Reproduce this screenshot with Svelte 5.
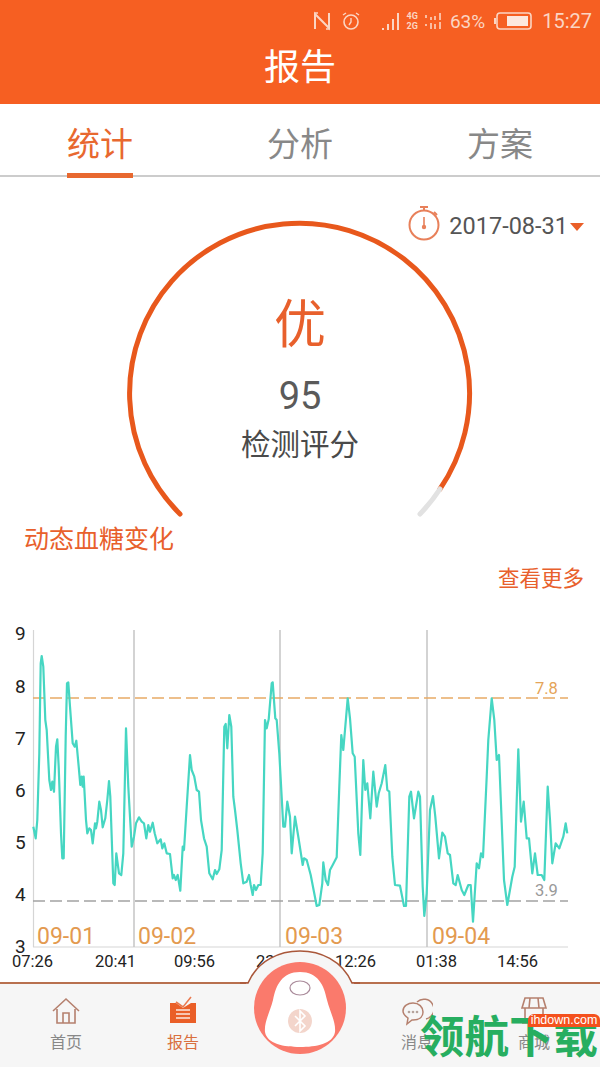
<script>
	// traced from the reference, in 3x crop coordinates: left crop starts at x=0, right crop at x=280
	const leftTrace = [
		[100,620],[107,655],[112,600],[118,400],[122,130],[125,108],[130,140],[136,300],[140,330],[148,480],[153,510],[157,485],[162,515],[168,380],[172,358],[176,440],[183,640],[187,715],[191,715],[197,350],[201,190],[205,187],[210,260],[218,370],[224,380],[229,362],[236,440],[241,495],[245,470],[248,500],[251,470],[258,600],[262,640],[268,625],[273,630],[278,670],[285,610],[288,625],[292,605],[298,545],[303,570],[308,622],[316,595],[322,540],[327,483],[331,530],[340,790],[344,795],[349,700],[357,760],[364,765],[370,700],[378,325],[385,500],[395,680],[402,650],[408,610],[417,592],[425,605],[432,610],[439,655],[445,615],[450,635],[458,608],[464,640],[472,670],[482,658],[487,685],[493,670],[500,700],[510,702],[518,775],[522,765],[527,780],[533,765],[541,812],[548,680],[552,690],[560,560],[570,405],[575,450],[583,470],[590,510],[597,515],[603,600],[612,655],[620,680],[628,760],[638,778],[645,750],[650,762],[658,748],[665,690],[673,320],[677,312],[682,385],[688,285],[694,320],[700,530],[705,570],[712,630],[722,730],[730,790],[740,785],[747,765],[752,795],[758,825],[762,795],[768,810],[775,795],[782,795],[788,700],[795,300],[800,325],[806,298],[815,190],[818,187],[826,295],[830,300],[838,400],[850,620],[855,620]
	];
	const rightTrace = [
		[22,545],[30,590],[35,700],[45,590],[55,650],[68,735],[72,715],[80,720],[92,765],[110,858],[118,855],[127,790],[130,727],[137,780],[144,795],[150,750],[158,735],[170,712],[178,500],[184,345],[190,390],[203,235],[210,295],[218,400],[224,410],[235,640],[241,705],[250,420],[256,510],[262,490],[271,595],[280,455],[290,560],[296,520],[305,490],[316,435],[322,510],[328,515],[337,710],[345,795],[360,797],[372,858],[378,858],[388,530],[393,515],[402,595],[415,515],[420,530],[428,800],[433,888],[440,820],[450,570],[459,528],[466,590],[477,715],[487,638],[495,650],[503,700],[510,705],[520,790],[527,795],[533,765],[545,810],[553,825],[565,795],[572,795],[579,905],[590,730],[597,745],[603,700],[609,712],[620,470],[625,360],[635,235],[643,300],[650,420],[657,405],[672,780],[682,855],[697,770],[704,740],[715,388],[723,605],[731,545],[740,655],[747,655],[757,760],[765,700],[773,765],[785,765],[793,780],[803,500],[810,600],[817,730],[827,670],[838,685],[850,650],[857,610],[862,640]
	];

	const glucose = [
		...leftTrace.map(([x, y]) => `${(x / 3).toFixed(1)},${(620 + y / 3).toFixed(1)}`),
		...rightTrace.map(([x, y]) => `${(280 + x / 3).toFixed(1)},${(620 + y / 3).toFixed(1)}`)
	].join(' ');

	const yLabels = [
		{ v: 9, y: 633 },
		{ v: 8, y: 686 },
		{ v: 7, y: 738 },
		{ v: 6, y: 790 },
		{ v: 5, y: 842 },
		{ v: 4, y: 894 },
		{ v: 3, y: 946 }
	];
	const days = [
		{ x: 134, labelX: 138, label: '09-02' },
		{ x: 280, labelX: 285, label: '09-03' },
		{ x: 427, labelX: 432, label: '09-04' }
	];
	const times = [
		{ x: 12, t: '07:26' },
		{ x: 95, t: '20:41' },
		{ x: 174, t: '09:56' },
		{ x: 256, t: '23:11' },
		{ x: 335, t: '12:26' },
		{ x: 416, t: '01:38' },
		{ x: 497, t: '14:56' }
	];
	const tabs = ['统计', '分析', '方案'];
</script>

<main class="page">
	<header class="top">
		<div class="status">
			<svg class="st-icon" width="18" height="20" viewBox="0 0 18 20">
				<path d="M2 18V3l14 14V2" fill="none" stroke="currentColor" stroke-width="2" />
				<path d="M5 2h-3M13 18h3" fill="none" stroke="currentColor" stroke-width="1.6" />
			</svg>
			<svg class="st-icon alarm" width="20" height="20" viewBox="0 0 20 20">
				<circle cx="10" cy="11" r="7" fill="none" stroke="currentColor" stroke-width="1.6" />
				<path d="M10 7v4l-2 3M2 4l3-2M18 4l-3-2" fill="none" stroke="currentColor" stroke-width="1.4" />
			</svg>
			<svg class="st-icon signal" width="18" height="20" viewBox="0 0 18 20">
				<path d="M2 17v2M7 13v6M12 8v11M17 2v17" stroke="currentColor" stroke-width="2" />
			</svg>
			<div class="net"><span>4G</span><span>2G</span></div>
			<svg class="st-icon" width="20" height="20" viewBox="0 0 20 20" opacity="0.8">
				<path d="M4 4v3M9 6v3M13 5v4M18 2v7M4 13v2M9 12v6M13 13v5M18 11v7" stroke="currentColor" stroke-width="2" />
			</svg>
			<span class="pct">63%</span>
			<svg class="battery" width="38" height="18" viewBox="0 0 38 18">
				<path d="M0 6h2v6H0z" fill="currentColor" />
				<rect x="3" y="1" width="34" height="16" rx="3" fill="none" stroke="currentColor" stroke-width="1.6" />
				<rect x="13" y="4" width="21" height="10" fill="#fde8de" />
			</svg>
			<span class="clock">15:27</span>
		</div>
		<h1>报告</h1>
	</header>

	<nav class="tabs">
		{#each tabs as tab, i}
			<div class="tab" class:active={i === 0}><span>{tab}</span></div>
		{/each}
	</nav>

	<section class="summary">
		<div class="score-stack">
			<svg class="gauge" width="354" height="310" viewBox="123 217 354 310">
				<path d="M180 514A170 170 0 1 1 440 489" fill="none" stroke="#e8581c" stroke-width="5" stroke-linecap="round" />
				<path d="M440 489A170 170 0 0 1 420 514" fill="none" stroke="#e2e2e2" stroke-width="5" stroke-linecap="round" />
			</svg>
			<div class="score">
				<div class="grade">优</div>
				<div class="num">95</div>
				<div class="caption">检测评分</div>
			</div>
			<div class="date">
				<svg width="34" height="36" viewBox="0 0 34 36">
					<circle cx="17" cy="20" r="14.5" fill="none" stroke="#e8805a" stroke-width="2" />
					<path d="M17 2v4M13 2h8M27 7l3 3" fill="none" stroke="#e8805a" stroke-width="2" />
					<path d="M17 12v9" stroke="#e8805a" stroke-width="1.6" />
					<circle cx="17" cy="22" r="2.2" fill="#e8805a" />
				</svg>
				<span>2017-08-31</span>
				<i class="caret"></i>
			</div>
		</div>
		<h2>动态血糖变化</h2>
		<div class="more">查看更多</div>
	</section>

	<svg class="chart" width="600" height="362" viewBox="0 620 600 362">
		<line x1="33.5" y1="630" x2="33.5" y2="947" class="axis-light" />
		<line x1="33" y1="947" x2="568" y2="947" class="axis-light" />
		{#each days as d}
			<line x1={d.x} y1="630" x2={d.x} y2="947" class="day-line" />
		{/each}
		<line x1="33" y1="698" x2="568" y2="698" class="limit-high" />
		<line x1="33" y1="901" x2="568" y2="901" class="limit-low" />
		<polyline points={glucose} class="trace" />
		{#each yLabels as l}
			<text x="15" y={l.y + 7} class="y-label">{l.v}</text>
		{/each}
		<text x="37" y="944" class="day-label">09-01</text>
		{#each days as d}
			<text x={d.labelX} y="944" class="day-label">{d.label}</text>
		{/each}
		<text x="535" y="694" class="limit-text high">7.8</text>
		<text x="535" y="896" class="limit-text low">3.9</text>
		{#each times as t}
			<text x={t.x} y="967" class="time-label">{t.t}</text>
		{/each}
	</svg>

	<footer class="bottom">
		<svg class="bump" width="120" height="40" viewBox="240 948 120 40">
			<path d="M246 988V983H248C258 960 280 951 300 951C320 951 342 960 352 983H354V988Z" fill="#f6f6f6" />
			<path d="M240 983H248C258 960 280 951 300 951C320 951 342 960 352 983H360" fill="none" stroke="#a9573a" stroke-width="1.6" />
		</svg>
		<div class="item">
			<svg width="32" height="32" viewBox="0 0 32 32">
				<path d="M3 16L16 4l13 12M7 14v14h18V14M13 28v-10h6v10" fill="none" stroke="#b5806e" stroke-width="1.6" />
			</svg>
			<span>首页</span>
		</div>
		<div class="item current">
			<svg width="32" height="32" viewBox="0 0 32 32">
				<path d="M3 8h6l7 5 8-5h5v20H3z" fill="#ea5f28" />
				<path d="M9 7l7 5 8-10" fill="none" stroke="#ea7a50" stroke-width="1.6" />
				<path d="M9 15h14M9 19h14M9 23h14" stroke="#fff" stroke-width="1.4" opacity="0.85" />
			</svg>
			<span>报告</span>
		</div>
		<div class="item spacer"></div>
		<div class="item">
			<svg width="32" height="32" viewBox="0 0 32 32">
				<path d="M16 7a10 10 0 1 1 9 17" fill="none" stroke="#b5806e" stroke-width="1.5" />
				<path d="M12 8c6 0 10 4 10 9s-4 8-10 8h-1l-5 4 1-6c-3-2-5-4-5-7 0-5 5-8 10-8z" fill="#f6f6f6" stroke="#b5806e" stroke-width="1.5" />
				<circle cx="8" cy="17" r="1.3" fill="#b5a39c" />
				<circle cx="12" cy="17" r="1.3" fill="#b5a39c" />
				<circle cx="16" cy="17" r="1.3" fill="#b5a39c" />
			</svg>
			<span>消息</span>
		</div>
		<div class="item">
			<svg width="32" height="32" viewBox="0 0 32 32">
				<path d="M7 3h18l3 10H4z" fill="none" stroke="#b5806e" stroke-width="1.6" />
				<path d="M12 3l-1 10M20 3l1 10M7 13v13h18V13M4 28h24" fill="none" stroke="#b5806e" stroke-width="1.6" />
			</svg>
			<span>商城</span>
		</div>
		<svg class="device" width="94" height="94" viewBox="253 961 94 94">
			<circle cx="300" cy="1008" r="46" fill="#fa7a6c" />
			<path
				d="M300 972C318 972 324 985 327 1000C330 1012 336 1022 335 1032C333 1044 316 1047 300 1047C284 1047 267 1044 265 1032C264 1022 270 1012 273 1000C276 985 282 972 300 972Z"
				fill="#fff"
			/>
			<ellipse cx="300" cy="988" rx="10" ry="7" fill="#fff" stroke="#a98a9a" stroke-width="1.2" />
			<circle cx="300" cy="1021" r="12" fill="#f3d5cb" />
			<path d="M295 1016l10 10-5 5v-20l5 5-10 10" fill="none" stroke="#fff" stroke-width="1.6" />
		</svg>
		<div class="watermark">
			<span class="brand">领航下载</span>
			<span class="site">ihdown.com</span>
		</div>
	</footer>
</main>

<style>
	:global(body) {
		background: #fff;
	}

	.page {
		position: relative;
		width: 600px;
		height: 1067px;
		overflow: hidden;
		display: flex;
		flex-direction: column;
		background: #fff;
		font-family: Roboto, 'Noto Sans CJK SC', sans-serif;
	}

	.top {
		height: 104px;
		flex: none;
		background: #f65f22;
		color: #fff;
	}

	.status {
		height: 42px;
		display: flex;
		align-items: center;
		justify-content: flex-end;
		padding-right: 8px;
		color: #fbd5c3;
	}

	.st-icon {
		margin-left: 11px;
	}

	.alarm {
		margin-left: 10px;
	}

	.signal {
		margin-left: 20px;
	}

	.net {
		display: flex;
		flex-direction: column;
		margin-left: 8px;
		margin-right: 2px;
		font-size: 9px;
		line-height: 10px;
		font-weight: 700;
	}

	.net + .st-icon {
		margin-left: 2px;
	}

	.pct {
		margin-left: 8px;
		font-size: 19px;
	}

	.battery {
		margin-left: 9px;
	}

	.clock {
		margin-left: 10px;
		font-size: 20px;
	}

	h1 {
		margin: 0;
		height: 48px;
		text-align: center;
		font-size: 36px;
		line-height: 52px;
		font-weight: 400;
		color: #fff;
	}

	.tabs {
		height: 73px;
		flex: none;
		display: grid;
		grid-template-columns: repeat(3, 1fr);
		box-sizing: border-box;
		border-bottom: 2px solid #ccc;
		font-family: 'Noto Sans CJK SC', sans-serif;
		font-size: 33px;
		color: #888;
	}

	.tab {
		display: flex;
		justify-content: center;
	}

	.tab span {
		box-sizing: border-box;
		height: 74px;
		width: 66px;
		text-align: center;
		line-height: 76px;
		white-space: nowrap;
	}

	.tab.active span {
		color: #e8682f;
		border-bottom: 5px solid #e8682f;
	}

	.summary {
		height: 443px;
		flex: none;
		display: flex;
		flex-direction: column;
	}

	.score-stack {
		display: grid;
		height: 343px;
	}

	.score-stack > * {
		grid-area: 1 / 1;
	}

	.gauge {
		justify-self: center;
		margin-top: 40px;
	}

	.score {
		justify-self: center;
		margin-top: 114px;
		display: flex;
		flex-direction: column;
		align-items: center;
	}

	.grade {
		font-size: 52px;
		line-height: 70px;
		color: #e8602c;
	}

	.num {
		height: 50px;
		margin-top: 10px;
		font-size: 38px;
		line-height: 50px;
		color: #5a5a5a;
	}

	.caption {
		margin-top: 4px;
		font-size: 29.5px;
		line-height: 40px;
		color: #4a4a4a;
	}

	.date {
		justify-self: end;
		align-self: start;
		margin-top: 34px;
		margin-right: 16px;
		display: flex;
		align-items: center;
		font-size: 23.5px;
		color: #555;
	}

	.date svg {
		margin-right: 8px;
		margin-top: -6px;
	}

	.caret {
		margin-left: 2px;
		margin-top: 1px;
		width: 0;
		height: 0;
		border-left: 7px solid transparent;
		border-right: 7px solid transparent;
		border-top: 8px solid #ea5f28;
	}

	h2 {
		margin: 0;
		padding-left: 24px;
		font-family: 'Noto Sans CJK SC', sans-serif;
		font-size: 25px;
		line-height: 34px;
		font-weight: 400;
		color: #e8602c;
	}

	.more {
		align-self: flex-end;
		margin-top: 10px;
		margin-right: 16px;
		font-size: 21.5px;
		line-height: 30px;
		color: #e8602c;
	}

	.chart {
		flex: none;
		display: block;
	}

	.axis-light {
		stroke: #d5d5d5;
		stroke-width: 1.2;
	}

	.day-line {
		stroke: #c4c4c4;
		stroke-width: 1.5;
	}

	.limit-high,
	.limit-low {
		stroke-width: 1.5;
		stroke-dasharray: 12 5;
	}

	.limit-high {
		stroke: #e8aa66;
	}

	.limit-low {
		stroke: #a3a3a3;
	}

	.trace {
		fill: none;
		stroke: #46d6c2;
		stroke-width: 2.2;
		stroke-linejoin: round;
	}

	.y-label {
		font-size: 19px;
		fill: #222;
	}

	.day-label {
		font-size: 23px;
		fill: #e39a50;
	}

	.limit-text {
		font-size: 16.5px;
	}

	.limit-text.high {
		fill: #e5a458;
	}

	.limit-text.low {
		fill: #999;
	}

	.time-label {
		font-size: 16.5px;
		fill: #222;
	}

	.bottom {
		position: relative;
		flex: 1;
		box-sizing: border-box;
		display: grid;
		grid-template-columns: repeat(5, 117px);
		padding: 11px 0 0 7.5px;
		border-top: 2px solid #b8704f;
		background: #f6f6f6;
	}

	.bump {
		position: absolute;
		left: 240px;
		top: -36px;
	}

	.device {
		position: absolute;
		left: 253px;
		top: -23px;
	}

	.item {
		display: flex;
		flex-direction: column;
		align-items: center;
		font-family: 'Noto Sans CJK SC', sans-serif;
		font-size: 16px;
		color: #888;
	}

	.item svg {
		margin-bottom: 4px;
	}

	.item span {
		line-height: 20px;
	}

	.item.current {
		color: #d9703f;
	}

	.watermark {
		position: absolute;
		right: 0;
		top: 23px;
		width: 180px;
		height: 57px;
	}

	.site {
		position: absolute;
		right: 0;
		top: 7px;
		width: 72px;
		height: 13px;
		border-radius: 6px 6px 0 0;
		background: #f4511e;
		color: #fff;
		font-family: 'Liberation Sans', sans-serif;
		font-size: 12.5px;
		line-height: 13px;
		text-align: center;
	}

	.brand {
		display: block;
		font-family: 'Noto Sans CJK SC', sans-serif;
		font-size: 44.5px;
		font-weight: 700;
		line-height: 54px;
		color: #27ae60;
		white-space: nowrap;
	}
</style>
